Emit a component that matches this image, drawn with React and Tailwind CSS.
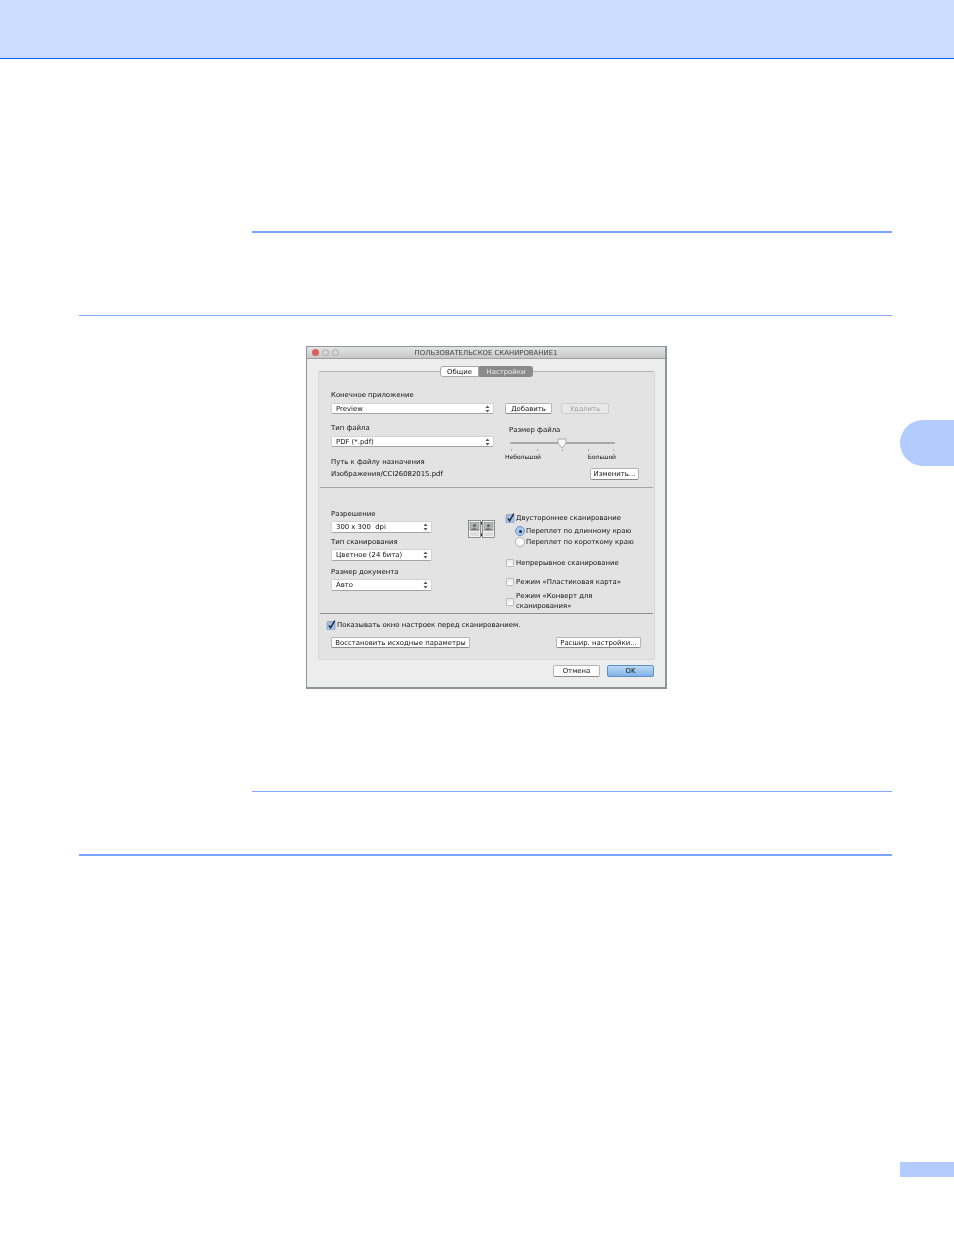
import React from 'react';

function Arrows() {
  return (
    <svg width="5" height="8" viewBox="0 0 5 8" className="shrink-0">
      <path d="M2.5 0.5 L4.5 3 L0.5 3 Z M2.5 7.5 L4.5 5 L0.5 5 Z" fill="#555" />
    </svg>
  );
}

function Select({ label, className }) {
  return (
    <div className={`flex items-center justify-between bg-white rounded-[2px] border border-[#d2d2d2] border-b-[#a4a4a4] pl-[4px] pr-[3px] text-[#111] ${className}`}>
      <span>{label}</span>
      <Arrows />
    </div>
  );
}

function Button({ label, className, disabled }) {
  return (
    <div className={`flex items-center justify-center rounded-[2px] border ${disabled ? 'border-[#cdcdcd] text-[#9c9c9c] bg-[#e9e9e9]' : 'border-[#b4b4b4] border-b-[#8a8a8a] text-[#111] bg-white'} ${className}`}>
      {label}
    </div>
  );
}

function Check({ checked }) {
  return (
    <div className="relative w-[8px] h-[8px] shrink-0 rounded-[1px] border border-[#bcbcbc] bg-[linear-gradient(#e8e8e8,#ffffff)]">
      {checked && (
        <svg width="11" height="11" viewBox="0 0 11 11" className="absolute -top-[3px] -left-[2px]">
          <rect x="1" y="3" width="8" height="8" rx="1" fill="#a9c3e8" stroke="#6f8fbd" strokeWidth="0.6" />
          <path d="M2.8 6.4 L4.6 8.8 L8.8 1.6" fill="none" stroke="#1f2d4a" strokeWidth="1.5" />
        </svg>
      )}
    </div>
  );
}

function Radio({ checked }) {
  return (
    <div className={`flex items-center justify-center w-[10px] h-[10px] shrink-0 rounded-full border ${checked ? 'border-[#6d93c9] bg-[#a9c8ee]' : 'border-[#b0b0b0] bg-white'}`}>
      {checked && <div className="w-[3px] h-[3px] rounded-full bg-[#16263f]" />}
    </div>
  );
}

function Page({ x }) {
  return (
    <g transform={`translate(${x} 0)`}>
      <rect x="0.5" y="0.5" width="12" height="17" fill="#f4f4f4" stroke="#666" strokeWidth="0.7" />
      <rect x="2" y="2.5" width="9" height="8" fill="#b4b8b4" stroke="#777" strokeWidth="0.5" />
      <circle cx="6.5" cy="5.5" r="1.6" fill="#666" />
      <path d="M2.5 10 L6 7.5 L10.5 10 Z" fill="#777" />
      <path d="M2 13 H11 M2 15 H11" stroke="#b4b4b4" strokeWidth="0.7" />
    </g>
  );
}

function DuplexIcon() {
  return (
    <svg width="27" height="18" viewBox="0 0 27 18" className="mt-[32px] ml-[36px] shrink-0">
      <Page x={0} />
      <Page x={14} />
      <path d="M13.5 2 V4.5 M13.5 13.5 V16" stroke="#333" strokeWidth="1" />
    </svg>
  );
}

export default function App() {
  return (
    <div className="relative w-[954px] h-[1235px] bg-white overflow-hidden">
      <div className="h-[59px] bg-[#ccdcff] border-b border-[#0a5cff]" />
      <div className="ml-[252px] w-[640px] mt-[172px] h-[2px] bg-[#7ba6ff]" />
      <div className="ml-[79px] w-[813px] mt-[82px] h-px bg-[#85a9ff]" />

      <div
        className="ml-[306px] mt-[30px] w-[361px] h-[343px] flex flex-col bg-[#ededed] border border-[#8f939c] border-r-2 border-b-2 text-[6.9px] leading-[10px] text-[#111] blur-[0.5px]"
        style={{ fontFamily: '"DejaVu Sans", sans-serif' }}
      >
        <div className="relative flex items-center justify-center h-[12px] bg-[linear-gradient(#e4e4e4,#c8c8c8)] border-b border-[#a0a0a0] text-[#444]">
          <div className="absolute left-[5px] top-[2px] flex gap-[3px]">
            <div className="w-[7px] h-[7px] rounded-full bg-[#d9605a]" />
            <div className="w-[7px] h-[7px] rounded-full border border-[#aaa] bg-[#d8d8d8]" />
            <div className="w-[7px] h-[7px] rounded-full border border-[#aaa] bg-[#d8d8d8]" />
          </div>
          ПОЛЬЗОВАТЕЛЬСКОЕ СКАНИРОВАНИЕ1
        </div>

        <div className="mx-[11px] mt-[12px] w-[337px] h-[289px] rounded-[3px] border border-[#d6d6d6] border-t-[#b0b0b0] bg-[#e3e3e3]">
          <div className="flex justify-center -mt-[6px] h-[11px]">
            <div className="w-[39px] flex items-center justify-center bg-white border border-[#a8a8a8] rounded-l-[3px]">Общие</div>
            <div className="w-[54px] flex items-center justify-center bg-[#8a8a8a] text-[#ececec] rounded-r-[3px]">Настройки</div>
          </div>

          <div className="flex ml-[12px] h-[110px]">
            <div className="w-[163px] flex flex-col">
              <div className="mt-[13px] h-[10px]">Конечное приложение</div>
              <Select label="Preview" className="mt-[3px] h-[11px]" />
              <div className="mt-[9px] h-[10px]">Тип файла</div>
              <Select label="PDF (*.pdf)" className="mt-[3px] h-[11px]" />
              <div className="mt-[10px] h-[10px]">Путь к файлу назначения</div>
              <div className="mt-[2px] h-[10px]">Изображения/CCI26082015.pdf</div>
            </div>
            <div className="ml-[11px] w-[136px] flex flex-col">
              <div className="mt-[26px] flex gap-[9px]">
                <Button label="Добавить" className="w-[47px] h-[11px]" />
                <Button label="Удалить" className="w-[48px] h-[11px]" disabled />
              </div>
              <div className="mt-[11px] ml-[4px] h-[10px]">Размер файла</div>
              <div className="relative mt-[3px] ml-[5px] w-[105px] h-[10px] flex items-center">
                <div className="w-full h-[2px] rounded-full bg-[#a8a8a8]" />
                <svg width="10" height="11" viewBox="0 0 10 11" className="absolute left-[47px] top-0">
                  <path d="M1 1 H9 V5 L5 10 L1 5 Z" fill="#fafafa" stroke="#9a9a9a" strokeWidth="0.8" />
                </svg>
              </div>
              <div className="mt-px ml-[5px] w-[105px] h-[3px] flex justify-between px-[1px]">
                <div className="w-px h-[2px] bg-[#aaa]" />
                <div className="w-px h-[2px] bg-[#aaa]" />
                <div className="w-px h-[2px] bg-[#aaa]" />
                <div className="w-px h-[2px] bg-[#aaa]" />
                <div className="w-px h-[2px] bg-[#aaa]" />
              </div>
              <div className="flex justify-between w-[111px] h-[10px] text-[6px]">
                <span>Небольшой</span>
                <span>Большой</span>
              </div>
              <Button label="Изменить..." className="mt-[6px] ml-[85px] w-[49px] h-[12px]" />
            </div>
          </div>

          <div className="mx-px h-px bg-[#a4a4a4]" />

          <div className="flex ml-[12px] h-[125px]">
            <div className="w-[101px] flex flex-col">
              <div className="mt-[21px] h-[10px]">Разрешение</div>
              <Select label="300 x 300  dpi" className="mt-[2px] h-[12px] whitespace-pre" />
              <div className="mt-[4px] h-[10px]">Тип сканирования</div>
              <Select label="Цветное (24 бита)" className="mt-[2px] h-[12px]" />
              <div className="mt-[6px] h-[10px]">Размер документа</div>
              <Select label="Авто" className="mt-[2px] h-[12px]" />
            </div>
            <DuplexIcon />
            <div className="ml-[11px] flex flex-col">
              <div className="mt-[25px] h-[10px] flex items-center gap-[2px]"><Check checked />Двустороннее сканирование</div>
              <div className="mt-[3px] ml-[9px] h-[10px] flex items-center gap-px"><Radio checked />Переплет по длинному краю</div>
              <div className="mt-px ml-[9px] h-[10px] flex items-center gap-px"><Radio />Переплет по короткому краю</div>
              <div className="mt-[11px] h-[10px] flex items-center gap-[2px]"><Check />Непрерывное сканирование</div>
              <div className="mt-[9px] h-[10px] flex items-center gap-[2px]"><Check />Режим «Пластиковая карта»</div>
              <div className="mt-[5px] flex items-center gap-[2px]">
                <Check />
                <div className="leading-[9.5px]">Режим «Конверт для<br />сканирования»</div>
              </div>
            </div>
          </div>

          <div className="mx-px h-px bg-[#8f8f8f]" />

          <div className="mt-[6px] ml-[8px] h-[10px] flex items-center gap-[2px]"><Check checked />Показывать окно настроек перед сканированием.</div>
          <div className="mt-[7px] ml-[12px] mr-[13px] flex justify-between items-start">
            <Button label="Восстановить исходные параметры" className="w-[139px] h-[11px]" />
            <Button label="Расшир. настройки..." className="w-[85px] h-[11px]" />
          </div>
        </div>

        <div className="mt-[5px] mr-[11px] flex justify-end gap-[7px]">
          <Button label="Отмена" className="w-[47px] h-[12px]" />
          <div className="w-[47px] h-[12px] flex items-center justify-center rounded-[2px] border border-[#5f8fc4] bg-[linear-gradient(#bcd9f5,#7fb4e8)] text-[#111]">OK</div>
        </div>
      </div>

      <div className="ml-[252px] w-[640px] mt-[102px] h-px bg-[#85a9ff]" />
      <div className="ml-[79px] w-[813px] mt-[62px] h-[2px] bg-[#7ba6ff]" />

      <div className="absolute right-0 top-[420px] w-[54px] h-[46px] rounded-l-[23px] bg-[#b3ccff]" />
      <div className="absolute right-0 top-[1162px] w-[54px] h-[15px] bg-[#b3ccff]" />
    </div>
  );
}
